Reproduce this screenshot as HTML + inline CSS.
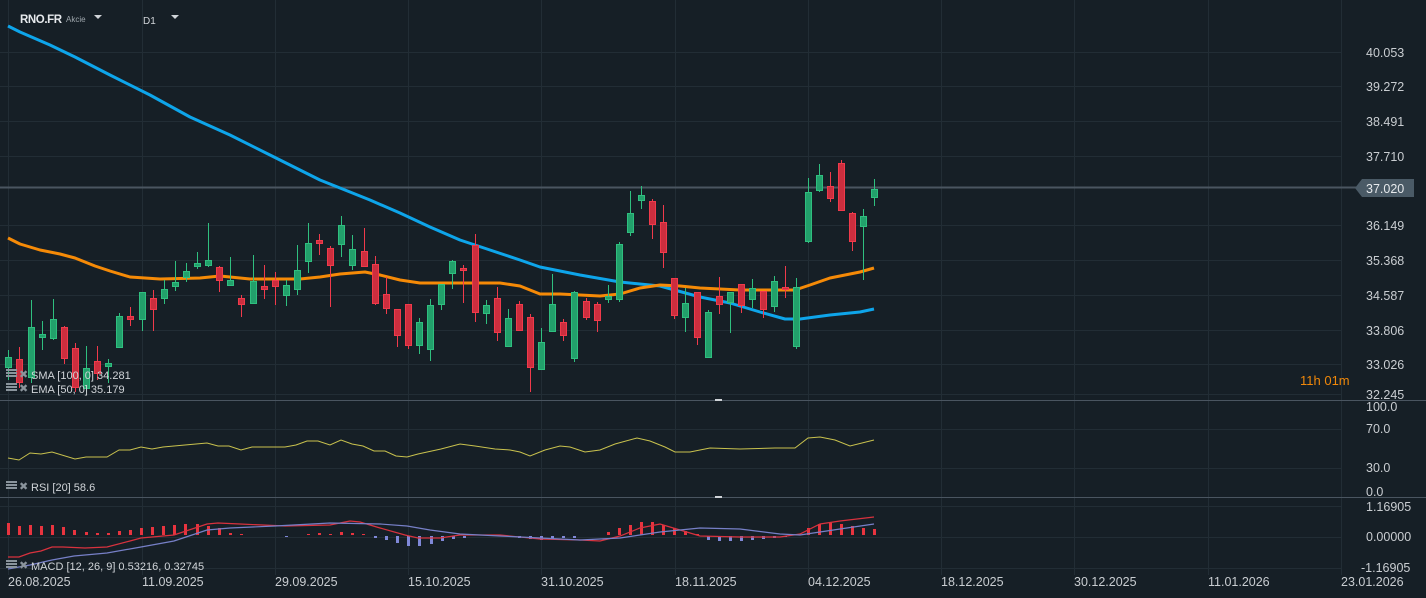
<!DOCTYPE html>
<html><head><meta charset="utf-8"><style>
html,body{margin:0;padding:0;background:#161f26;width:1426px;height:598px;overflow:hidden;font-family:"Liberation Sans",sans-serif}
svg{display:block}
text{font-family:"Liberation Sans",sans-serif}
</style></head><body>
<svg width="1426" height="598" viewBox="0 0 1426 598" xmlns="http://www.w3.org/2000/svg">
<rect width="1426" height="598" fill="#161f26"/>
<!-- grid -->
<g stroke="#222d35" stroke-width="1">
<path d="M8.5 0V575M142.5 0V575M275.5 0V575M408.5 0V575M541.5 0V575M675.5 0V575M808.5 0V575M941.5 0V575M1074.5 0V575M1208.5 0V575M1341.5 0V575"/>
<path d="M0 52.5H1341M0 86.5H1341M0 121.5H1341M0 156.5H1341M0 225.5H1341M0 260.5H1341M0 295.5H1341M0 330.5H1341M0 364.5H1341M0 394.5H1341"/>
<path d="M0 429.5H1341M0 468.5H1341M0 506.5H1341M0 537.5H1341M0 568.5H1341"/>
</g>
<!-- separators -->
<path d="M0 400.5H1426M0 497.5H1426" stroke="#4a5560" stroke-width="1"/>
<rect x="715" y="399" width="7" height="2" fill="#d0d4d8"/>
<rect x="715" y="496" width="7" height="2" fill="#d0d4d8"/>
<!-- price line -->
<path d="M0 187.5H1356" stroke="#4a5560" stroke-width="2"/>
<path d="M1355 188L1362 179H1414V197H1362Z" fill="#4a5a66"/>
<text x="1366" y="193" font-size="12.5" fill="#e6e9ec">37.020</text>
<!-- axis labels -->
<g font-size="12.5" fill="#c9cdd1">
<text x="1366" y="57">40.053</text><text x="1366" y="91">39.272</text><text x="1366" y="126">38.491</text><text x="1366" y="161">37.710</text><text x="1366" y="230">36.149</text><text x="1366" y="265">35.368</text><text x="1366" y="300">34.587</text><text x="1366" y="335">33.806</text><text x="1366" y="369">33.026</text><text x="1366" y="399">32.245</text>
<text x="1366" y="411">100.0</text><text x="1366" y="433">70.0</text><text x="1366" y="472">30.0</text><text x="1366" y="496">0.0</text>
<text x="1366" y="511">1.16905</text><text x="1366" y="541">0.00000</text><text x="1361" y="572">-1.16905</text>
</g>
<g font-size="12.5" fill="#c9cdd1">
<text x="8" y="586">26.08.2025</text><text x="142" y="586">11.09.2025</text><text x="275" y="586">29.09.2025</text><text x="408" y="586">15.10.2025</text><text x="541" y="586">31.10.2025</text><text x="675" y="586">18.11.2025</text><text x="808" y="586">04.12.2025</text><text x="941" y="586">18.12.2025</text><text x="1074" y="586">30.12.2025</text><text x="1208" y="586">11.01.2026</text><text x="1341" y="586">23.01.2026</text>
</g>
<text x="1300" y="385" font-size="13" fill="#f0880a">11h 01m</text>
<!-- SMA -->
<polyline fill="none" stroke="#0ea5ea" stroke-width="3" stroke-linejoin="round" points="8,26 20,32 50,45 75,57 110,75 150,95 190,117 230,135 270,155 320,180 350,192 370,200 400,213 430,227 460,240 490,250 520,260 540,267 580,275 620,282 660,286 700,297 730,303 760,312 785,319 800,319 830,315 860,312 874,309"/>
<!-- EMA -->
<polyline fill="none" stroke="#f58a07" stroke-width="3" stroke-linejoin="round" points="8,238 20,244 40,250 60,254 75,258 95,266 110,271 130,277 160,279 200,278 220,276 250,279 300,279 320,277 340,274 365,272 380,275 400,280 420,283 450,283 500,283 520,286 540,294 560,294 600,296 620,294 640,288 660,285 680,286 700,288 740,290 795,290 810,285 830,278 860,272 874,268"/>
<!-- green candles -->
<g stroke="#2fbf7f" fill="#22a06b" stroke-width="1">
<path d="M8.5 350V380M31.5 300V383M42.5 321V350M53.5 299V340M86.5 346V392M108.5 359V383M119.5 313V347M142.5 292V331M164.5 280V304M175.5 261V291M186.5 263V282M197.5 252V269M208.5 223V267M230.5 257V286M253.5 255V304M286.5 280V306M297.5 245V295M308.5 223V273M341.5 216V257M352.5 235V270M419.5 318V354M430.5 299V361M441.5 284V310M452.5 260V289M486.5 300V324M508.5 309V346M541.5 328V369M552.5 274V331M574.5 291V362M608.5 285V303M619.5 242V302M630.5 191V236M641.5 186V209M685.5 288V332M708.5 310V357M730.5 292V333M752.5 279V308M774.5 276V312M796.5 278V349M808.5 178V243M819.5 164V192M863.5 209V280M874.5 179V206"/>
<rect x="5.5" y="357.5" width="6" height="10"/><rect x="28.5" y="327.5" width="6" height="50"/><rect x="39.5" y="334.5" width="6" height="3"/><rect x="50.5" y="319.5" width="6" height="19"/><rect x="83.5" y="368.5" width="6" height="20"/><rect x="105.5" y="363.5" width="6" height="3"/><rect x="116.5" y="316.5" width="6" height="31"/><rect x="139.5" y="292.5" width="6" height="27"/><rect x="161.5" y="289.5" width="6" height="9"/><rect x="172.5" y="282.5" width="6" height="4"/><rect x="183.5" y="271.5" width="6" height="6"/><rect x="194.5" y="263.5" width="6" height="3"/><rect x="205.5" y="260.5" width="6" height="5"/><rect x="227.5" y="280.5" width="6" height="5"/><rect x="250.5" y="281.5" width="6" height="22"/><rect x="283.5" y="285.5" width="6" height="10"/><rect x="294.5" y="270.5" width="6" height="19"/><rect x="305.5" y="243.5" width="6" height="18"/><rect x="338.5" y="225.5" width="6" height="19"/><rect x="349.5" y="249.5" width="6" height="16"/><rect x="416.5" y="322.5" width="6" height="23"/><rect x="427.5" y="305.5" width="6" height="44"/><rect x="438.5" y="284.5" width="6" height="20"/><rect x="449.5" y="261.5" width="6" height="12"/><rect x="483.5" y="305.5" width="6" height="8"/><rect x="505.5" y="318.5" width="6" height="28"/><rect x="538.5" y="342.5" width="6" height="27"/><rect x="549.5" y="304.5" width="6" height="27"/><rect x="571.5" y="292.5" width="6" height="66"/><rect x="605.5" y="296.5" width="6" height="3"/><rect x="616.5" y="244.5" width="6" height="55"/><rect x="627.5" y="213.5" width="6" height="19"/><rect x="638.5" y="195.5" width="6" height="5"/><rect x="682.5" y="303.5" width="6" height="14"/><rect x="705.5" y="312.5" width="6" height="45"/><rect x="727.5" y="292.5" width="6" height="10"/><rect x="749.5" y="288.5" width="6" height="11"/><rect x="771.5" y="281.5" width="6" height="25"/><rect x="793.5" y="287.5" width="6" height="59"/><rect x="805.5" y="192.5" width="6" height="49"/><rect x="816.5" y="175.5" width="6" height="15"/><rect x="860.5" y="216.5" width="6" height="10"/><rect x="871.5" y="189.5" width="6" height="8"/>
</g>
<!-- red candles -->
<g stroke="#f03a4b" fill="#cc2e3e" stroke-width="1">
<path d="M19.5 347V388M64.5 326V364M75.5 343V392M97.5 346V380M130.5 307V326M153.5 290V331M219.5 266V292M241.5 295V317M264.5 265V299M275.5 272V305M319.5 234V255M330.5 246V307M364.5 228V267M375.5 256V305M386.5 277V314M397.5 309V347M408.5 304V349M463.5 265V303M475.5 234V322M497.5 287V341M519.5 301V330M530.5 314V392M563.5 319V341M586.5 298V320M597.5 302V332M652.5 199V239M663.5 205V268M674.5 278V319M697.5 292V345M719.5 277V314M741.5 284V313M763.5 291V318M785.5 266V298M830.5 172V202M841.5 160V211M852.5 212V251"/>
<rect x="16.5" y="359.5" width="6" height="23"/><rect x="61.5" y="327.5" width="6" height="31"/><rect x="72.5" y="348.5" width="6" height="39"/><rect x="94.5" y="361.5" width="6" height="12"/><rect x="127.5" y="316.5" width="6" height="3"/><rect x="150.5" y="298.5" width="6" height="11"/><rect x="216.5" y="267.5" width="6" height="13"/><rect x="238.5" y="298.5" width="6" height="6"/><rect x="261.5" y="286.5" width="6" height="3"/><rect x="272.5" y="280.5" width="6" height="6"/><rect x="316.5" y="240.5" width="6" height="3"/><rect x="327.5" y="248.5" width="6" height="17"/><rect x="361.5" y="251.5" width="6" height="15"/><rect x="372.5" y="264.5" width="6" height="39"/><rect x="383.5" y="294.5" width="6" height="14"/><rect x="394.5" y="309.5" width="6" height="26"/><rect x="405.5" y="304.5" width="6" height="41"/><rect x="460.5" y="268.5" width="6" height="2"/><rect x="472.5" y="245.5" width="6" height="67"/><rect x="494.5" y="298.5" width="6" height="34"/><rect x="516.5" y="304.5" width="6" height="26"/><rect x="527.5" y="317.5" width="6" height="50"/><rect x="560.5" y="322.5" width="6" height="13"/><rect x="583.5" y="301.5" width="6" height="16"/><rect x="594.5" y="304.5" width="6" height="16"/><rect x="649.5" y="201.5" width="6" height="23"/><rect x="660.5" y="222.5" width="6" height="30"/><rect x="671.5" y="278.5" width="6" height="37"/><rect x="694.5" y="292.5" width="6" height="45"/><rect x="716.5" y="296.5" width="6" height="8"/><rect x="738.5" y="284.5" width="6" height="21"/><rect x="760.5" y="291.5" width="6" height="18"/><rect x="782.5" y="287.5" width="6" height="2"/><rect x="827.5" y="186.5" width="6" height="12"/><rect x="838.5" y="163.5" width="6" height="47"/><rect x="849.5" y="213.5" width="6" height="28"/>
</g>
<!-- RSI -->
<polyline fill="none" stroke="#c9c24e" stroke-width="1" points="8,458 19,460 30,453 41,454 52,452 75,459 86,457 107,457 119,450 130,450 141,447 152,449 163,447 196,444 207,443 218,446 229,446 241,450 252,447 285,447 296,445 307,441 318,441 330,445 341,440 352,444 363,446 374,451 385,451 396,456 407,457 418,454 441,449 460,444 475,446 495,449 510,450 520,452 530,456 545,450 560,446 570,447 585,452 600,450 615,444 637,438 650,441 665,447 675,452 690,452 710,448 740,449 775,448 795,448 808,438 820,437 835,440 850,446 874,440"/>
<!-- MACD histogram -->
<g fill="#e8343f">
<rect x="7" y="523" width="3" height="12"/><rect x="18" y="526" width="3" height="9"/><rect x="29" y="525" width="3" height="10"/><rect x="40" y="526" width="3" height="9"/><rect x="51" y="525" width="3" height="10"/><rect x="62" y="527" width="3" height="8"/><rect x="73" y="530" width="3" height="5"/><rect x="85" y="532" width="3" height="3"/><rect x="96" y="533" width="3" height="2"/><rect x="107" y="533" width="3" height="2"/><rect x="118" y="531" width="3" height="4"/><rect x="129" y="530" width="3" height="5"/><rect x="140" y="528" width="3" height="7"/><rect x="151" y="527" width="3" height="8"/><rect x="162" y="526" width="3" height="9"/><rect x="173" y="525" width="3" height="10"/><rect x="184" y="524" width="3" height="11"/><rect x="196" y="524" width="3" height="11"/><rect x="207" y="526" width="3" height="9"/><rect x="218" y="528" width="3" height="7"/><rect x="229" y="533" width="3" height="2"/><rect x="240" y="534" width="3" height="1"/>
<rect x="307" y="534" width="3" height="1"/><rect x="318" y="533" width="3" height="2"/><rect x="329" y="534" width="3" height="1"/><rect x="340" y="532" width="3" height="3"/><rect x="351" y="533" width="3" height="2"/><rect x="362" y="534" width="3" height="1"/>
<rect x="607" y="532" width="3" height="3"/><rect x="618" y="528" width="3" height="7"/><rect x="629" y="525" width="3" height="10"/><rect x="640" y="522" width="3" height="13"/><rect x="651" y="522" width="3" height="13"/><rect x="662" y="525" width="3" height="10"/><rect x="673" y="528" width="3" height="7"/><rect x="684" y="531" width="3" height="4"/><rect x="696" y="534" width="3" height="1"/>
<rect x="807" y="528" width="3" height="7"/><rect x="818" y="524" width="3" height="11"/><rect x="829" y="522" width="3" height="13"/><rect x="840" y="524" width="3" height="11"/><rect x="851" y="526" width="3" height="9"/><rect x="862" y="528" width="3" height="7"/><rect x="873" y="529" width="3" height="6"/>
</g>
<g fill="#7f88d8">
<rect x="285" y="536" width="3" height="1"/><rect x="374" y="536" width="3" height="2"/><rect x="385" y="536" width="3" height="4"/><rect x="396" y="536" width="3" height="7"/><rect x="407" y="536" width="3" height="10"/><rect x="418" y="536" width="3" height="10"/><rect x="430" y="536" width="3" height="8"/><rect x="441" y="536" width="3" height="5"/><rect x="452" y="536" width="3" height="3"/><rect x="463" y="536" width="3" height="2"/><rect x="518" y="536" width="3" height="2"/><rect x="529" y="536" width="3" height="3"/><rect x="540" y="536" width="3" height="4"/><rect x="551" y="536" width="3" height="3"/><rect x="562" y="536" width="3" height="2"/><rect x="573" y="536" width="3" height="2"/>
<rect x="707" y="536" width="3" height="4"/><rect x="718" y="536" width="3" height="5"/><rect x="729" y="536" width="3" height="5"/><rect x="740" y="536" width="3" height="5"/><rect x="751" y="536" width="3" height="4"/><rect x="762" y="536" width="3" height="3"/><rect x="773" y="536" width="3" height="2"/><rect x="784" y="536" width="3" height="1"/>
</g>
<polyline fill="none" stroke="#d8323e" stroke-width="1.2" points="8,557 19,557 30,553 41,551 52,547 63,547 85,548 107,547 130,541 141,538 174,535 207,524 218,523 240,524 285,526 330,525 350,521 360,522 380,528 405,535 418,538 440,538 460,535 500,535 540,539 580,540 600,541 620,536 640,528 660,524 680,530 700,536 740,537 780,537 800,534 820,524 840,521 874,517"/>
<polyline fill="none" stroke="#7780c8" stroke-width="1.2" points="8,569 30,565 52,560 74,556 107,553 141,547 174,541 207,530 230,528 275,526 330,523 380,524 407,526 430,530 460,534 500,536 540,538 580,540 620,538 660,532 700,528 740,529 780,534 800,535 840,529 874,524"/>
<!-- legends -->
<g fill="#8a949c">
<rect x="6" y="369" width="11" height="2"/><rect x="6" y="372" width="11" height="2"/><rect x="6" y="375" width="11" height="2"/>
<rect x="6" y="383" width="11" height="2"/><rect x="6" y="386" width="11" height="2"/><rect x="6" y="389" width="11" height="2"/>
<rect x="6" y="481" width="11" height="2"/><rect x="6" y="484" width="11" height="2"/><rect x="6" y="487" width="11" height="2"/>
<rect x="6" y="560" width="11" height="2"/><rect x="6" y="563" width="11" height="2"/><rect x="6" y="566" width="11" height="2"/>
</g>
<g font-size="11" fill="#8a949c"><text x="19" y="378">✖</text><text x="19" y="392">✖</text><text x="19" y="490">✖</text><text x="19" y="569">✖</text></g>
<g font-size="11" fill="#d0d4d8">
<text x="31" y="379">SMA [100, 0] 34.281</text>
<text x="31" y="393">EMA [50, 0] 35.179</text>
<text x="31" y="491">RSI [20] 58.6</text>
<text x="31" y="570">MACD [12, 26, 9] 0.53216, 0.32745</text>
</g>
<!-- header -->
<text x="20" y="23" font-size="11.5" font-weight="bold" fill="#e6e9ec" letter-spacing="-0.4">RNO.FR</text>
<text x="66" y="22" font-size="8" fill="#a0a8ae">Akcie</text>
<path d="M94 15H102L98 19Z" fill="#d0d4d8"/>
<text x="143" y="24" font-size="10" fill="#d0d4d8">D1</text>
<path d="M171 15H179L175 19Z" fill="#d0d4d8"/>
</svg>
</body></html>
